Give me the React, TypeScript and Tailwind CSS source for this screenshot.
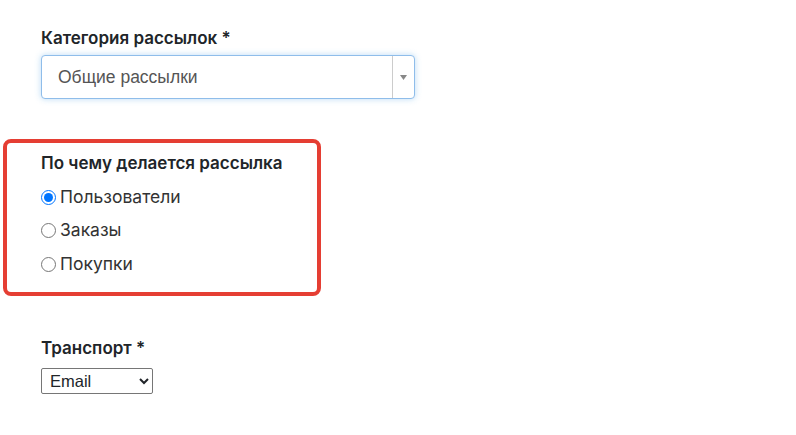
import React from "react";

export default function App() {
  const radios = [
    { label: "Пользователи", checked: true, mt: "mt-[10px]" },
    { label: "Заказы", checked: false, mt: "mt-[9px]" },
    { label: "Покупки", checked: false, mt: "mt-[10px]" },
  ];
  return (
    <div className="w-[796px] h-[435px] bg-white overflow-hidden font-['Inter',sans-serif] text-[#212529]">
      <div className="pl-[41px] pt-[26px] flex flex-col items-start">
        <div className="text-[17px] leading-[24px] font-semibold">Категория рассылок *</div>
        <div className="mt-[5px] w-[374px] h-[44px] flex items-stretch border border-[#8fbdea] rounded-[4px] shadow-[0_0_6px_rgba(102,175,233,0.45)] bg-white">
          <div className="flex-1 flex items-center pl-[16px] font-['Liberation_Sans',sans-serif] text-[17.5px] text-[#555]">
            Общие рассылки
          </div>
          <div className="w-[22px] border-l border-[#ccc] flex items-center justify-center">
            <svg width="7" height="5" viewBox="0 0 7 5">
              <path d="M0 0 L7 0 L3.5 5 Z" fill="#888" />
            </svg>
          </div>
        </div>
      </div>

      <div className="ml-[3px] mt-[40px] w-[318px] h-[157px] border-4 border-[#e53e33] rounded-[8px] pl-[34px] pt-[8px]">
        <div className="text-[17px] leading-[24px] font-semibold">По чему делается рассылка</div>
        {radios.map((r) => (
          <label key={r.label} className={`${r.mt} flex items-center h-[24px] text-[17.5px] text-[#333]`}>
            <input
              type="radio"
              name="by"
              defaultChecked={r.checked}
              className="m-0 mr-[4px] w-[15px] h-[15px]"
            />
            <span>{r.label}</span>
          </label>
        ))}
      </div>

      <div className="pl-[41px] mt-[40px] flex flex-col items-start">
        <div className="text-[17px] leading-[24px] font-semibold">Транспорт *</div>
        <select
          defaultValue="Email"
          className="mt-[8px] w-[112px] h-[26px] border border-[#767676] rounded-[2px] pl-[4px] font-['Liberation_Sans',sans-serif] text-[16.5px] text-[#212529] bg-white"
        >
          <option>Email</option>
          <option>SMS</option>
        </select>
      </div>
    </div>
  );
}
